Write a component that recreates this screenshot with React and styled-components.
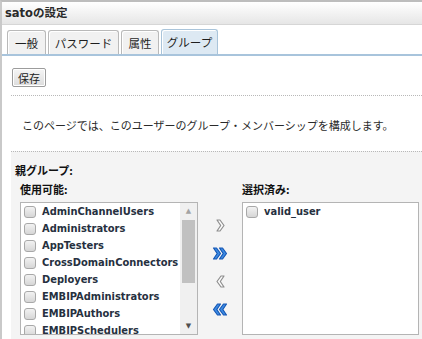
import React from 'react'
import styled, { createGlobalStyle } from 'styled-components'

const GlobalStyle = createGlobalStyle`
  html, body {
    margin: 0;
    padding: 0;
    background: #fff;
  }
  body {
    font-family: "DejaVu Sans", "Noto Sans CJK JP", sans-serif;
    font-size: 11px;
    color: #222;
  }
`

const available = [
  'AdminChannelUsers',
  'Administrators',
  'AppTesters',
  'CrossDomainConnectors',
  'Deployers',
  'EMBIPAdministrators',
  'EMBIPAuthors',
  'EMBIPSchedulers',
]

const selected = ['valid_user']

const tabs = [
  { label: '一般', width: 39 },
  { label: 'パスワード', width: 71 },
  { label: '属性', width: 38 },
  { label: 'グループ', width: 57, active: true },
]

const Chevron = ({ left, double, blue }) => {
  const fill = blue ? '#3d8ce4' : '#fbfbfb'
  const stroke = blue ? '#1657b4' : '#8e8e8e'
  const one = left
    ? 'M7.5 1.5 L4.5 1.5 L0.5 7 L4.5 12.5 L7.5 12.5 L3.8 7 Z'
    : 'M0.5 1.5 L3.5 1.5 L7.5 7 L3.5 12.5 L0.5 12.5 L4.2 7 Z'
  return (
    <svg width={double ? 17 : 11} height="15" viewBox={double ? '0 0 17 15' : '0 0 11 15'}>
      <g transform={double ? 'translate(1,0.5)' : 'translate(1.5,0.5)'}>
        <path d={one} fill={fill} stroke={stroke} strokeWidth="1.2" strokeLinejoin="round" />
        {double && (
          <path d={one} transform="translate(6,0)" fill={fill} stroke={stroke} strokeWidth="1.2" strokeLinejoin="round" />
        )}
      </g>
    </svg>
  )
}

const App = () => {
  return (
    <>
      <GlobalStyle />
      <Panel>
        <Header>satoの設定</Header>
        <TabBar>
          {tabs.map((t) => (
            <Tab key={t.label} $active={t.active} $width={t.width}>
              {t.label}
            </Tab>
          ))}
        </TabBar>
        <Toolbar>
          <SaveButton>保存</SaveButton>
        </Toolbar>
        <Description>このページでは、このユーザーのグループ・メンバーシップを構成します。</Description>
        <GroupSection>
          <SectionTitle>親グループ:</SectionTitle>
          <Columns>
            <Column $width={178}>
              <ListLabel>使用可能:</ListLabel>
              <ListBox>
                <Items>
                  {available.map((name) => (
                    <Item key={name}>
                      <Check type="checkbox" />
                      {name}
                    </Item>
                  ))}
                </Items>
                <ScrollTrack>
                  <ScrollArrow>▲</ScrollArrow>
                  <ScrollThumb />
                  <ScrollArrow>▼</ScrollArrow>
                </ScrollTrack>
              </ListBox>
            </Column>
            <Mover>
              <MoveButton title="追加">
                <Chevron />
              </MoveButton>
              <MoveButton title="すべて追加">
                <Chevron double blue />
              </MoveButton>
              <MoveButton title="削除">
                <Chevron left />
              </MoveButton>
              <MoveButton title="すべて削除">
                <Chevron left double blue />
              </MoveButton>
            </Mover>
            <Column $width={177}>
              <ListLabel>選択済み:</ListLabel>
              <ListBox>
                <Items>
                  {selected.map((name) => (
                    <Item key={name}>
                      <Check type="checkbox" />
                      {name}
                    </Item>
                  ))}
                </Items>
              </ListBox>
            </Column>
          </Columns>
        </GroupSection>
      </Panel>
    </>
  )
}

const Panel = styled.div`
  height: 339px;
  box-sizing: border-box;
  border-left: 2px solid #c9c9c9;
  border-top: 2px solid #bdbdbd;
  display: flex;
  flex-direction: column;
  overflow: hidden;
`

const Header = styled.div`
  height: 22px;
  line-height: 22px;
  padding-left: 3px;
  font-weight: bold;
  font-size: 11.5px;
  color: #2a2a2a;
  background: linear-gradient(#ffffff, #e6e6e6);
  border-bottom: 1px solid #d6d6d6;
`

const TabBar = styled.div`
  display: flex;
  align-items: flex-end;
  gap: 2px;
  padding: 4px 0 0 5px;
  border-bottom: 2px solid #a8c4dc;
`

const Tab = styled.div`
  box-sizing: border-box;
  width: ${(p) => p.$width}px;
  height: ${(p) => (p.$active ? 25 : 24)}px;
  display: flex;
  align-items: center;
  justify-content: center;
  font-family: "Noto Sans CJK JP", sans-serif;
  font-size: 11.5px;
  color: #1e1e1e;
  background: ${(p) => (p.$active ? '#dde9f3' : '#f1f1f1')};
  border: 1px solid ${(p) => (p.$active ? '#a9c4da' : '#b9b9b9')};
  border-bottom: none;
  border-radius: 3px 3px 0 0;
  box-shadow: inset 1px 1px 0 #ffffff;
`

const Toolbar = styled.div`
  padding: 12px 0 0 10px;
`

const SaveButton = styled.button`
  box-sizing: border-box;
  width: 34px;
  height: 19px;
  padding: 0;
  font-family: "Noto Sans CJK JP", sans-serif;
  font-size: 11px;
  color: #222;
  background: linear-gradient(#f6f6f6, #dcdcdc);
  border: 1px solid #9c9c9c;
  border-radius: 2px;
  box-shadow: inset 0 0 0 1px #ffffff;
`

const Description = styled.p`
  margin: 8px 0 0 9px;
  padding: 0 0 0 11px;
  height: 55px;
  line-height: 58px;
  border-top: 1px dotted #b8b8b8;
  font-family: "Noto Sans CJK JP", sans-serif;
  font-size: 11px;
  color: #2a2a2a;
  white-space: nowrap;
`

const GroupSection = styled.div`
  flex: 1;
  margin-left: 9px;
  padding: 9px 0 0 4px;
  background: #f4f4f4;
  border-top: 1px dotted #b8b8b8;
`

const SectionTitle = styled.div`
  font-family: "Noto Sans CJK JP", sans-serif;
  font-weight: bold;
  font-size: 11px;
  color: #111;
  height: 19px;
  line-height: 19px;
`

const Columns = styled.div`
  display: flex;
  align-items: flex-start;
  padding-left: 5px;
`

const Column = styled.div`
  display: flex;
  flex-direction: column;
  width: ${(p) => p.$width}px;
`

const ListLabel = styled.div`
  font-family: "Noto Sans CJK JP", sans-serif;
  font-weight: bold;
  font-size: 11px;
  color: #111;
  height: 20px;
  padding-top: 2px;
  line-height: 14px;
`

const ListBox = styled.div`
  box-sizing: border-box;
  height: 133px;
  display: flex;
  background: #fff;
  border: 1px solid #b4b4b4;
  overflow: hidden;
`

const Items = styled.ul`
  flex: 1;
  list-style: none;
  margin: 0;
  padding: 0 0 0 3px;
`

const Item = styled.li`
  display: flex;
  align-items: center;
  gap: 6px;
  height: 17px;
  font-family: "DejaVu Sans Condensed", "DejaVu Sans", sans-serif;
  font-weight: bold;
  font-size: 11px;
  color: #263040;
  white-space: nowrap;
`

const Check = styled.input`
  appearance: none;
  margin: 0;
  flex: none;
  width: 12px;
  height: 12px;
  box-sizing: border-box;
  border: 1px solid #a8a8a8;
  border-radius: 3px;
  background: linear-gradient(#f2f2f2, #d6d6d6);
`

const ScrollTrack = styled.div`
  flex: none;
  width: 17px;
  display: flex;
  flex-direction: column;
  align-items: center;
  background: #f0f0f0;
`

const ScrollArrow = styled.div`
  height: 16px;
  line-height: 16px;
  font-size: 7px;
  color: #a3a3a3;
  &:last-child {
    margin-top: auto;
    color: #505050;
  }
`

const ScrollThumb = styled.div`
  width: 13px;
  height: 63px;
  margin-top: 1px;
  background: #c1c1c1;
`

const Mover = styled.div`
  width: 44px;
  display: flex;
  flex-direction: column;
  align-items: center;
  gap: 12px;
  padding-top: 37px;
`

const MoveButton = styled.div`
  height: 16px;
  display: flex;
  align-items: center;
  justify-content: center;
`

export default App
